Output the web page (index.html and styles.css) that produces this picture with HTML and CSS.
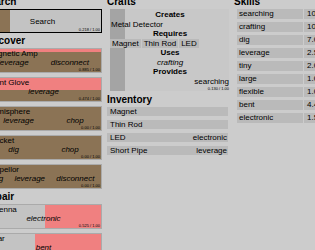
FILE: index.html
```html
<!DOCTYPE html>
<html lang="en">
<head>
  <meta charset="UTF-8" />
  <meta name="viewport" content="width=device-width, initial-scale=1" />
  <title>Workshop</title>
  <link rel="stylesheet" href="styles.css">
</head>
<body>

  <main class="board">

    <!-- left: actions -->
    <div class="column">
      <section class="section">
        <h2>Search</h2>
        <div class="action" style="--p: 0.218">
          <div class="action-label">Search</div>
          <div class="frac">0.218 / 1.00</div>
        </div>
      </section>

      <section class="section">
        <h2>Discover</h2>
        <div class="card-list">
          <div class="card discover" style="--p: 0.885">
            <div class="name">Magnetic Amp</div>
            <div class="tags"><span>leverage</span><span>disconnect</span></div>
            <div class="frac">0.885 / 1.00</div>
          </div>
          <div class="card discover" style="--p: 0.474">
            <div class="name">Giant Glove</div>
            <div class="tags"><span>leverage</span></div>
            <div class="frac">0.474 / 1.00</div>
          </div>
          <div class="card discover" style="--p: 1">
            <div class="name">Hemisphere</div>
            <div class="tags"><span>leverage</span><span>chop</span></div>
            <div class="frac">0.00 / 1.00</div>
          </div>
          <div class="card discover" style="--p: 1">
            <div class="name">Bracket</div>
            <div class="tags"><span>dig</span><span>chop</span></div>
            <div class="frac">0.00 / 1.00</div>
          </div>
          <div class="card discover" style="--p: 1">
            <div class="name">Propellor</div>
            <div class="tags"><span>dig</span><span>leverage</span><span>disconnect</span></div>
            <div class="frac">0.00 / 1.00</div>
          </div>
        </div>
      </section>

      <section class="section">
        <h2>Repair</h2>
        <div class="card-list">
          <div class="card repair" style="--p: 0.525">
            <div class="name">Antenna</div>
            <div class="tags"><span>electronic</span></div>
            <div class="frac">0.525 / 1.00</div>
          </div>
          <div class="card repair" style="--p: 0.436">
            <div class="name">Gear</div>
            <div class="tags"><span>bent</span></div>
            <div class="frac">0.436 / 1.00</div>
          </div>
        </div>
      </section>
    </div>

    <!-- middle: crafts + inventory -->
    <div class="column">
      <section class="section">
        <h2>Crafts</h2>
        <div class="craft" style="--p: 0.13">
          <div class="craft-label">Creates</div>
          <div>Metal Detector</div>
          <div class="craft-label">Requires</div>
          <div class="chips">
            <span class="chip">Magnet</span>
            <span class="chip">Thin Rod</span>
            <span class="chip">LED</span>
          </div>
          <div class="craft-label">Uses</div>
          <div class="craft-uses">crafting</div>
          <div class="craft-label">Provides</div>
          <div class="craft-provides">searching</div>
          <div class="frac">0.130 / 1.00</div>
        </div>
      </section>

      <section class="section inventory">
        <h2>Inventory</h2>
        <div class="inv-list">
          <div class="inv-row"><span>Magnet</span></div>
          <div class="inv-row"><span>Thin Rod</span></div>
          <div class="inv-row"><span>LED</span><span>electronic</span></div>
          <div class="inv-row"><span>Short Pipe</span><span>leverage</span></div>
        </div>
      </section>
    </div>

    <!-- right: skills -->
    <div class="column">
      <section class="section">
        <h2>Skills</h2>
        <div class="skill-list">
          <div class="skill-row"><span>searching</span><span>10</span></div>
          <div class="skill-row"><span>crafting</span><span>10</span></div>
          <div class="skill-row"><span>dig</span><span>7.0</span></div>
          <div class="skill-row"><span>leverage</span><span>2.5</span></div>
          <div class="skill-row"><span>tiny</span><span>2.0</span></div>
          <div class="skill-row"><span>large</span><span>1.0</span></div>
          <div class="skill-row"><span>flexible</span><span>1.0</span></div>
          <div class="skill-row"><span>bent</span><span>4.4</span></div>
          <div class="skill-row"><span>electronic</span><span>1.5</span></div>
        </div>
      </section>
    </div>

  </main>

</body>
</html>
```

FILE: styles.css
```css
* {
  box-sizing: border-box;
}
body {
  margin: 0;
  overflow: hidden;
  background: #cccccc;
  color: #000;
  font-family: "Liberation Sans", Arial, sans-serif;
  font-size: 8px;
}

.board {
  display: grid;
  grid-template-columns: 119px 122px 120px;
  column-gap: 5px;
  align-items: start;
  margin: -4px 0 0 -17px;
}

h2 {
  font-size: 10px;
  line-height: 12px;
  font-weight: bold;
  margin: 0 0 1px;
}
.section {
  margin-bottom: 2px;
}

.frac {
  font-size: 4px;
  line-height: 5px;
  text-align: right;
  white-space: nowrap;
}

/* search button */
.action {
  border: 1px solid #000;
  background: linear-gradient(to right, #8b7355 calc(var(--p) * 100%), #c3c3c3 0);
  padding: 0 1px;
}
.action-label {
  padding-top: 7px;
  line-height: 10px;
  text-align: center;
}

/* discover / repair cards */
.card-list {
  display: flex;
  flex-direction: column;
  gap: 4px;
}
.card {
  height: 25px;
  border: 1px solid #aaa;
  padding: 0 1px 0 3px;
  white-space: nowrap;
}
.card.discover {
  background: linear-gradient(to top, #8b7355 calc(var(--p) * 100%), #f08080 0);
}
.card.repair {
  background: linear-gradient(to right, #c3c3c3 calc(var(--p) * 100%), #f08080 0);
}
.name {
  line-height: 9px;
}
.tags {
  display: flex;
  justify-content: space-around;
  font-style: italic;
  line-height: 9px;
}

/* crafts panel */
.craft {
  margin: 1px 0 0 3px;
  padding: 1px 0 0 1px;
  line-height: 9.5px;
  background: linear-gradient(to right, #a4a4a4 calc(var(--p) * 100%), #c8c8c8 0);
  white-space: nowrap;
}
.craft-label {
  font-weight: bold;
  text-align: center;
}
.chips {
  display: flex;
  align-items: center;
  gap: 1px;
  height: 9.5px;
  margin-left: -1px;
}
.chip {
  background: #b9b9b9;
  padding: 0 2px;
  line-height: 9px;
}
.craft-uses {
  font-style: italic;
  text-align: center;
}
.craft-provides {
  text-align: right;
}

/* inventory */
.inventory h2 {
  margin-top: 3px;
}
.inv-list {
  display: flex;
  flex-direction: column;
  gap: 4px;
}
.inv-row {
  display: flex;
  justify-content: space-between;
  background: #bababa;
  line-height: 9px;
  padding: 0 1px 0 3px;
  margin-right: 1px;
}

/* skills */
.skill-list {
  display: flex;
  flex-direction: column;
  gap: 3px;
  margin-top: 1px;
  padding-left: 3px;
}
.skill-row {
  display: grid;
  grid-template-columns: 66px 1fr;
  column-gap: 1px;
  line-height: 10px;
}
.skill-row span {
  background: #bababa;
  padding-left: 2px;
}
.skill-row span + span {
  padding-left: 3px;
}
```
